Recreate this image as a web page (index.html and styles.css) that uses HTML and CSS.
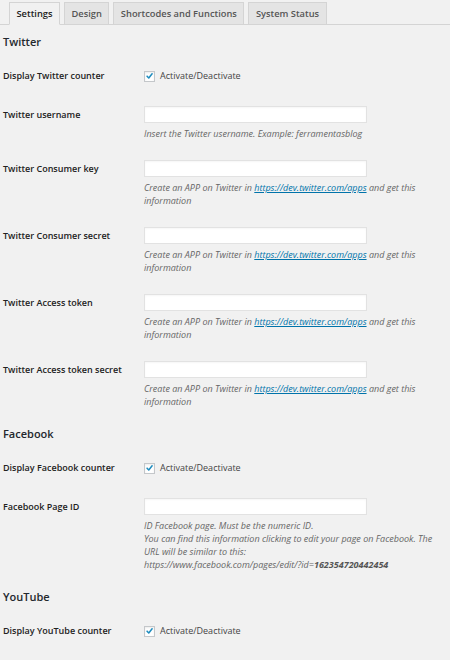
FILE: index.html
```html
<!DOCTYPE html>
<html lang="en">
<head>
<meta charset="utf-8">
<title>Settings</title>
<link rel="stylesheet" href="styles.css">
</head>
<body>
<div class="wrap">
  <nav class="tabs">
    <a class="tab active">Settings</a>
    <a class="tab">Design</a>
    <a class="tab">Shortcodes and Functions</a>
    <a class="tab">System Status</a>
  </nav>

  <h3 class="section-title first">Twitter</h3>
  <div class="row row-check">
    <div class="label">Display Twitter counter</div>
    <label class="check"><span class="box"><svg viewBox="0 0 10 10" width="10" height="10"><path d="M2.3 5.2 L4.2 7.2 L7.9 2.6" fill="none" stroke="#1e8cbe" stroke-width="1.7" stroke-linecap="round" stroke-linejoin="round"/></svg></span>Activate/Deactivate</label>
  </div>
  <div class="row">
    <div class="label">Twitter username</div>
    <div class="field"><input class="text-input" type="text"><p class="desc">Insert the Twitter username. Example: ferramentasblog</p></div>
  </div>
  <div class="row">
    <div class="label">Twitter Consumer key</div>
    <div class="field"><input class="text-input" type="text"><p class="desc">Create an APP on Twitter in <a class="link">https://dev.twitter.com/apps</a> and get this information</p></div>
  </div>
  <div class="row">
    <div class="label">Twitter Consumer secret</div>
    <div class="field"><input class="text-input" type="text"><p class="desc">Create an APP on Twitter in <a class="link">https://dev.twitter.com/apps</a> and get this information</p></div>
  </div>
  <div class="row">
    <div class="label">Twitter Access token</div>
    <div class="field"><input class="text-input" type="text"><p class="desc">Create an APP on Twitter in <a class="link">https://dev.twitter.com/apps</a> and get this information</p></div>
  </div>
  <div class="row">
    <div class="label">Twitter Access token secret</div>
    <div class="field"><input class="text-input" type="text"><p class="desc">Create an APP on Twitter in <a class="link">https://dev.twitter.com/apps</a> and get this information</p></div>
  </div>

  <h3 class="section-title">Facebook</h3>
  <div class="row row-check">
    <div class="label">Display Facebook counter</div>
    <label class="check"><span class="box"><svg viewBox="0 0 10 10" width="10" height="10"><path d="M2.3 5.2 L4.2 7.2 L7.9 2.6" fill="none" stroke="#1e8cbe" stroke-width="1.7" stroke-linecap="round" stroke-linejoin="round"/></svg></span>Activate/Deactivate</label>
  </div>
  <div class="row">
    <div class="label">Facebook Page ID</div>
    <div class="field"><input class="text-input" type="text"><p class="desc">ID Facebook page. Must be the numeric ID.<br>You can find this information clicking to edit your page on Facebook. The URL will be similar to this:<br>https://www.facebook.com/pages/edit/?id=<b class="strong">162354720442454</b></p></div>
  </div>

  <h3 class="section-title">YouTube</h3>
  <div class="row row-check">
    <div class="label">Display YouTube counter</div>
    <label class="check"><span class="box"><svg viewBox="0 0 10 10" width="10" height="10"><path d="M2.3 5.2 L4.2 7.2 L7.9 2.6" fill="none" stroke="#1e8cbe" stroke-width="1.7" stroke-linecap="round" stroke-linejoin="round"/></svg></span>Activate/Deactivate</label>
  </div>
</div>
</body>
</html>
```

FILE: styles.css
```css
* { box-sizing: border-box; }
html, body {
  margin: 0;
  padding: 0;
  background: #f1f1f1;
}
body {
  font-family: "Open Sans", "Liberation Sans", sans-serif;
  color: #222;
  width: 450px;
  height: 660px;
  overflow: hidden;
}
.wrap {
  padding: 0 0 0 3px;
}
.tabs {
  display: flex;
  gap: 4px;
  padding: 2px 0 0 9px;
  margin-left: -3px;
  border-bottom: 1px solid #d4d4d4;
}
.tab {
  display: block;
  height: 23px;
  margin-bottom: -1px;
  padding: 0 6.5px;
  border: 1px solid #d4d4d4;
  background: #e4e4e4;
  color: #555;
  font-size: 9.3px;
  font-weight: 600;
  line-height: 21px;
  white-space: nowrap;
}
.tab.active {
  background: #f1f1f1;
  color: #222;
  border-bottom-color: #f1f1f1;
}
.section-title {
  margin: 8px 0 6px;
  font-size: 11px;
  font-weight: 600;
  line-height: 16px;
  color: #23282d;
}
.section-title.first {
  margin-top: 9px;
}
.row {
  display: grid;
  grid-template-columns: 141px 223px;
  padding: 10px 0;
}
.row-check {
  align-items: center;
  min-height: 40px;
}
.label {
  font-size: 9px;
  font-weight: 600;
  line-height: 17px;
  color: #222;
}
.row-check .label { line-height: 20px; }
.check {
  display: flex;
  align-items: center;
  font-size: 9px;
  color: #444;
  line-height: 20px;
}
.box {
  display: flex;
  align-items: center;
  justify-content: center;
  width: 11px;
  height: 11px;
  margin-right: 5px;
  background: #fff;
  border: 1px solid #c4c7ca;
  box-shadow: inset 0 1px 2px rgba(0,0,0,0.08);
}
.box svg { display: block; }
.field {
  width: 223px;
}
.text-input {
  display: block;
  width: 223px;
  height: 17px;
  margin: 0;
  padding: 0;
  background: #fff;
  border: 1px solid #e2e2e2;
  box-shadow: inset 0 1px 2px rgba(0,0,0,0.04);
  outline: none;
}
.desc {
  margin: 4px 0 0;
  width: 300px;
  font-size: 9px;
  font-style: italic;
  line-height: 13px;
  color: #666;
}
.link {
  color: #0073aa;
  text-decoration: underline;
}
.strong {
  font-weight: 700;
  color: #555;
}
```
